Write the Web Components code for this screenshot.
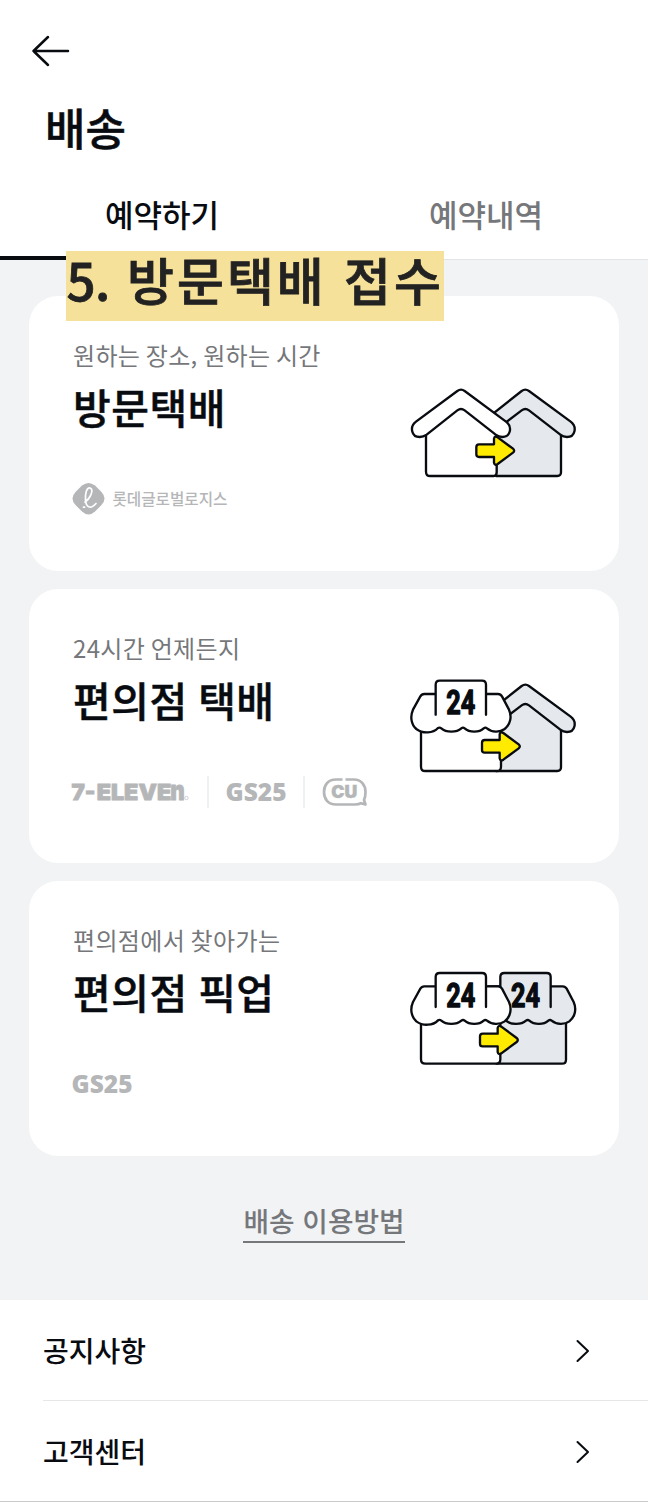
<!DOCTYPE html>
<html lang="ko">
<head>
<meta charset="utf-8">
<title>배송</title>
<style>
  :root {
    --ink: #080b10;
    --gray: #75777b;
    --logo: #b5b6b8;
    --surface: #f2f3f5;
    --shade: #e5e9ed;
    --yellow: #ffeb00;
  }
  body {
    margin: 0;
    background: #fff;
    color: var(--ink);
    font-family: "Noto Sans CJK KR", "Noto Sans", sans-serif;
  }
</style>
</head>
<body>
<delivery-page></delivery-page>

<script>
class PageHeader extends HTMLElement {
  constructor() {
    super();
    this.attachShadow({ mode: 'open' });
  }

  connectedCallback() {
    this.shadowRoot.innerHTML = `
      <style>
        :host { display: block; height: 172px; }
        .back { display: block; padding: 31px 0 0 30px; }
        h1 {
          margin: 24px 0 0 45px;
          font-size: 44px;
          line-height: 64px;
          font-weight: 500;
          -webkit-text-stroke: .5px;
        }
      </style>
      <svg class="back" width="42" height="40" viewBox="0 0 42 40" fill="none" stroke="currentColor" stroke-width="2.5" stroke-linecap="round" stroke-linejoin="round">
        <path d="M18 6 3.5 20 18 34M3.5 20H38"/>
      </svg>
      <h1><slot></slot></h1>
    `;
  }
}
customElements.define('page-header', PageHeader);

class TabBar extends HTMLElement {
  constructor() {
    super();
    this.attachShadow({ mode: 'open' });
  }

  connectedCallback() {
    this.shadowRoot.innerHTML = `
      <style>
        :host {
          display: flex;
          height: 88px;
          box-sizing: border-box;
          box-shadow: inset 0 -1px #e3e4e6;
        }
        ::slotted(*) {
          flex: 1;
          box-sizing: border-box;
          border-bottom: 4px solid transparent;
          text-align: center;
          font-size: 31px;
          line-height: 84px;
          font-weight: 500;
          color: var(--gray);
        }
        ::slotted(.active) {
          color: var(--ink);
          border-color: var(--ink);
        }
      </style>
      <slot></slot>
    `;
  }
}
customElements.define('tab-bar', TabBar);

class StepLabel extends HTMLElement {
  constructor() {
    super();
    this.attachShadow({ mode: 'open' });
  }

  connectedCallback() {
    this.shadowRoot.innerHTML = `
      <style>
        :host {
          position: absolute;
          left: 65.5px;
          top: 251px;
          width: 378px;
          height: 70px;
          background: #f5e199;
          color: #222;
          font-size: 51px;
          line-height: 56px;
          font-weight: 500;
          letter-spacing: 3px;
          white-space: nowrap;
          -webkit-text-stroke: .8px;
        }
        ::slotted(b) {
          padding-left: 1px;
          font-weight: 500;
          letter-spacing: -.5px;
        }
      </style>
      <slot></slot>
    `;
  }
}
customElements.define('step-label', StepLabel);

// drawings share one 570 wide grid, three units to a pixel
const arrow = (x, y) => `
  <path transform="translate(${x} ${y})" fill="var(--yellow)" d="M8-19H53V-36Q55-46 64-40L110-6Q117 0 110 6L64 40Q55 46 53 36V19H8Q0 19 0 11V-11Q0-19 8-19Z"/>`;

const awning = (x, y, fill) => `
  <g transform="translate(${x} ${y})">
    <path fill="${fill}" d="M72 44H38Q30 44 26 51L4 91C-5 111-2 135 14 149C34 164 64 162 79 146Q84 143 89 147C103 160 135 160 149 147Q154 143 159 147C173 160 203 160 216 147Q221 143 226 147C240 159 264 160 279 149C297 135 301 111 292 91L271 51Q267 44 259 44H224"/>
    <path fill="${fill}" d="M72 106V16Q72 4 84 4H211Q223 4 223 16V106"/>
    <text x="104" y="105" textLength="87" lengthAdjust="spacingAndGlyphs" font-family="Roboto" font-weight="700" font-size="102" fill="#080b10" stroke-width="4">24</text>
  </g>`;

// the wall tops end inside the roof band, which is painted over them
const backHouse = (dy) => `
  <g transform="translate(0 ${dy})">
    <path fill="var(--shade)" d="M288 150V303H472Q483 303 483 292V150L377 75Z"/>
    <path fill="var(--shade)" d="M230 155 365 48Q376 40 387 48L512 140C532 155 526 186 501 186Q490 186 481 179L387 106Q376 98 365 106L286 166Z"/>
  </g>`;

const drawings = {
  houses: `
    ${backHouse(0)}
    <path fill="#fff" d="M78 150V290Q78 303 91 303H281Q290 303 290 292V150L183 75Z"/>
    <path fill="#fff" d="M172 48Q183 40 194 48L318 140C338 155 332 186 307 186Q296 186 287 179L194 106Q183 98 172 106L80 179Q70 186 59 186C34 186 28 155 48 140Z"/>
    ${arrow(229, 227)}`,
  shopHouse: `
    ${backHouse(15)}
    <path fill="#fff" d="M63 180V305Q63 318 76 318H290Q303 318 303 305V180Z"/>
    ${awning(35, 43, '#fff')}
    ${arrow(246, 244)}`,
  shops: `
    <path fill="var(--shade)" d="M290 170V311H486Q498 311 498 299V170Z"/>
    ${awning(229, 35, 'var(--shade)')}
    <path fill="#fff" d="M63 170V298Q63 311 76 311H288Q301 311 301 298V170Z"/>
    ${awning(35, 35, '#fff')}
    ${arrow(240, 240)}`
};

class DeliveryCard extends HTMLElement {
  constructor() {
    super();
    this.attachShadow({ mode: 'open' });
  }

  connectedCallback() {
    this.shadowRoot.innerHTML = `
      <style>
        :host {
          display: flex;
          justify-content: space-between;
          height: 274.6px;
          box-sizing: border-box;
          padding: 41px 29px 0 43px;
          border-radius: 29px;
          background: #fff;
        }
        p {
          margin: 0;
          padding-left: 1px;
          font-size: 24px;
          line-height: 36px;
          letter-spacing: .35px;
          word-spacing: -1.6px;
          color: var(--gray);
          white-space: nowrap;
        }
        h2 {
          margin: 4px 0 0;
          padding-left: 1px;
          font-size: 41px;
          line-height: 59px;
          font-weight: 500;
          letter-spacing: .5px;
          word-spacing: -1.5px;
          white-space: nowrap;
          -webkit-text-stroke: .5px;
        }
        .brands {
          display: flex;
          align-items: center;
          height: 40px;
          margin-top: 43px;
        }
        .art { flex: none; margin-top: var(--art-top, 38px); }
      </style>
      <div>
        <p><slot name="note"></slot></p>
        <h2><slot></slot></h2>
        <div class="brands"><slot name="brand"></slot></div>
      </div>
      <svg class="art" width="190" height="120" viewBox="0 0 570 360" fill="none" stroke="#080b10" stroke-width="7" stroke-linecap="round" stroke-linejoin="round">
        ${drawings[this.getAttribute('art')]}
      </svg>
    `;
  }
}
customElements.define('delivery-card', DeliveryCard);

const brands = {
  lotte: `
    <svg width="160" height="34" viewBox="0 0 160 34">
      <path fill="var(--logo)" d="M10 3.5Q16.5-1.5 23 3.5L29.5 10Q35.5 16.5 29.5 23L23 29.5Q16.5 35.5 10 29.5L3.5 23Q-2.5 16.5 3.5 10Z"/>
      <path fill="none" stroke="#fff" stroke-width="1.7" stroke-linecap="round" d="M13 20C18 17 22 8 18.5 6.2C14.5 4.5 13 12 13.5 18C14 25 18 28 24 21.5M11.5 25.2H12.5"/>
      <text x="40.5" y="22.8" textLength="115" lengthAdjust="spacingAndGlyphs" font-size="16" font-weight="500">롯데글로벌로지스</text>
    </svg>`,
  seven: `
    <svg width="120" height="40" viewBox="0 -3 120 40">
      <g font-family="Inter" font-size="21.5" font-weight="900" stroke="var(--logo)" stroke-width=".8">
        <text x="-.5" y="24.5" textLength="24" lengthAdjust="spacingAndGlyphs">7-</text>
        <text x="24.7" y="24.5" textLength="74.5" lengthAdjust="spacingAndGlyphs">ELEVE</text>
        <text x="98.2" y="24.5" textLength="14.5" lengthAdjust="spacingAndGlyphs" font-size="27">n</text>
      </g>
      <circle cx="114.5" cy="23" r="1.7" fill="none" stroke="var(--logo)" stroke-width=".6"/>
    </svg>`,
  gs25: `
    <svg width="62" height="34" viewBox="0 0 62 34">
      <text x="-.5" y="26" textLength="61" lengthAdjust="spacingAndGlyphs" font-family="Open Sans" font-size="25" font-weight="800">GS25</text>
    </svg>`,
  cu: `
    <svg width="46" height="34" viewBox="0 0 46 34">
      <path fill="none" stroke="var(--logo)" stroke-width="2.7" stroke-linejoin="round" d="M20.5 4.5H14C6 4.5 2 10 2 17S6 29.5 14 29.5H33Q37 29.5 39 28.2L43.5 29.5 42 25Q43.5 22 43.5 17C43.5 10 39 4.5 32 4.5H23.5"/>
      <text x="9.3" y="23.3" textLength="26" lengthAdjust="spacingAndGlyphs" font-family="Inter" font-size="17" font-weight="900" stroke="var(--logo)" stroke-width=".4">CU</text>
    </svg>`
};

class BrandLogo extends HTMLElement {
  constructor() {
    super();
    this.attachShadow({ mode: 'open' });
  }

  connectedCallback() {
    this.shadowRoot.innerHTML = `
      <style>
        :host { display: flex; align-items: center; }
        :host([divided])::before {
          content: "";
          width: 2px;
          height: 32px;
          margin: 0 17px 0 15px;
          background: #f0f1f2;
        }
        svg { display: block; overflow: visible; }
        text { fill: var(--logo); }
      </style>
      ${brands[this.getAttribute('name')]}
    `;
  }
}
customElements.define('brand-logo', BrandLogo);

class MenuRow extends HTMLElement {
  constructor() {
    super();
    this.attachShadow({ mode: 'open' });
  }

  connectedCallback() {
    this.shadowRoot.innerHTML = `
      <style>
        :host {
          display: flex;
          align-items: center;
          justify-content: space-between;
          height: 101px;
          box-sizing: border-box;
          margin-left: 43px;
          padding-right: 57px;
          border-bottom: 1px solid #e6e7e8;
          font-size: 28px;
          line-height: 40px;
          font-weight: 500;
        }
        svg { margin-top: 1px; }
      </style>
      <span><slot></slot></span>
      <svg width="16" height="26" viewBox="0 0 16 26" fill="none" stroke="currentColor" stroke-width="2" stroke-linecap="round" stroke-linejoin="round">
        <path d="M2.5 3 13 13 2.5 23"/>
      </svg>
    `;
  }
}
customElements.define('menu-row', MenuRow);

class DeliveryPage extends HTMLElement {
  constructor() {
    super();
    this.attachShadow({ mode: 'open' });
  }

  connectedCallback() {
    this.shadowRoot.innerHTML = `
      <style>
        :host { display: block; position: relative; height: 1502px; overflow: hidden; }
        main {
          display: flex;
          flex-direction: column;
          gap: 18px;
          height: 1040px;
          box-sizing: border-box;
          padding: 36px 29px 0;
          background: var(--surface);
        }
        .guide {
          align-self: center;
          margin-top: 26px;
          border-bottom: 2px solid var(--gray);
          color: var(--gray);
          font-size: 27.8px;
          line-height: 41px;
          font-weight: 500;
        }
        .last {
          margin-left: 0;
          padding-left: 43px;
          border-color: #c9cacc;
        }
      </style>
      <page-header>배송</page-header>
      <tab-bar>
        <div class="active">예약하기</div>
        <div>예약내역</div>
      </tab-bar>
      <main>
        <delivery-card art="houses">
          <span slot="note">원하는 장소, 원하는 시간</span>
          방문택배
          <brand-logo slot="brand" name="lotte"></brand-logo>
        </delivery-card>
        <delivery-card art="shopHouse" style="--art-top: 35.3px">
          <span slot="note">24시간 언제든지</span>
          편의점 택배
          <brand-logo slot="brand" name="seven"></brand-logo>
          <brand-logo slot="brand" name="gs25" divided></brand-logo>
          <brand-logo slot="brand" name="cu" divided></brand-logo>
        </delivery-card>
        <delivery-card art="shops" style="--art-top: 37.8px">
          <span slot="note">편의점에서 찾아가는</span>
          편의점 픽업
          <brand-logo slot="brand" name="gs25"></brand-logo>
        </delivery-card>
        <div class="guide">배송 이용방법</div>
      </main>
      <menu-row>공지사항</menu-row>
      <menu-row class="last">고객센터</menu-row>
      <step-label><b>5.</b> 방문택배 접수</step-label>
    `;
  }
}
customElements.define('delivery-page', DeliveryPage);
</script>
</body>
</html>
